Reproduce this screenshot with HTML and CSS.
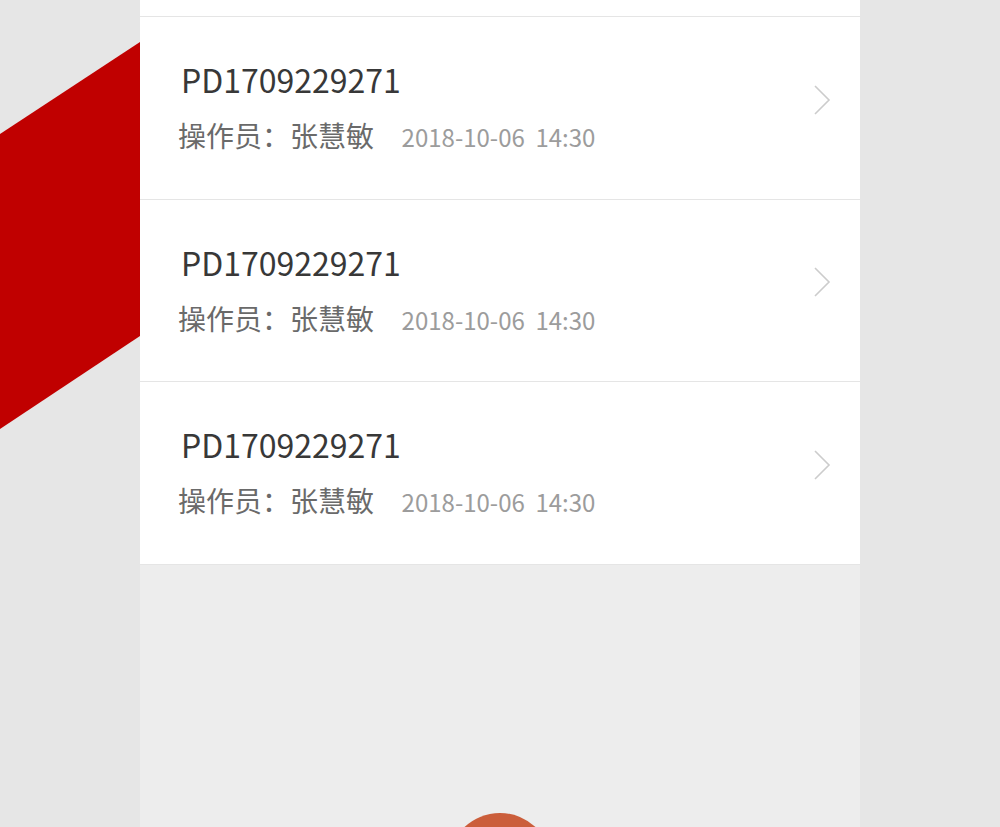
FILE: index.html
```html
<!DOCTYPE html>
<html lang="zh-CN">
<head>
    <meta charset="UTF-8">
    <meta name="viewport" content="width=device-width, initial-scale=1.0">
    <title>盘点单列表</title>
    <link rel="stylesheet" href="styles.css">
</head>
<body>
    <svg class="ribbon" width="140" height="400" viewBox="0 0 140 400">
        <polygon points="0,134 140,42 140,336 0,429" fill="#c00000"/>
    </svg>

    <div class="panel">
        <div class="list-top"></div>

        <div class="item">
            <div class="info">
                <div class="order-no">PD1709229271</div>
                <div class="meta">
                    <span class="operator">操作员：张慧敏</span>
                    <span class="date">2018-10-06</span>
                    <span class="time">14:30</span>
                </div>
            </div>
            <svg class="arrow" width="18" height="30" viewBox="0 0 18 30">
                <polyline points="1,1 15,15 1,29" fill="none" stroke="#cccccc" stroke-width="1.6"/>
            </svg>
        </div>

        <div class="item">
            <div class="info">
                <div class="order-no">PD1709229271</div>
                <div class="meta">
                    <span class="operator">操作员：张慧敏</span>
                    <span class="date">2018-10-06</span>
                    <span class="time">14:30</span>
                </div>
            </div>
            <svg class="arrow" width="18" height="30" viewBox="0 0 18 30">
                <polyline points="1,1 15,15 1,29" fill="none" stroke="#cccccc" stroke-width="1.6"/>
            </svg>
        </div>

        <div class="item">
            <div class="info">
                <div class="order-no">PD1709229271</div>
                <div class="meta">
                    <span class="operator">操作员：张慧敏</span>
                    <span class="date">2018-10-06</span>
                    <span class="time">14:30</span>
                </div>
            </div>
            <svg class="arrow" width="18" height="30" viewBox="0 0 18 30">
                <polyline points="1,1 15,15 1,29" fill="none" stroke="#cccccc" stroke-width="1.6"/>
            </svg>
        </div>

        <button class="fab" type="button"></button>
    </div>
</body>
</html>
```

FILE: styles.css
```css
body {
    margin: 0;
    padding: 0;
    background-color: #e6e6e6;
    font-family: "Noto Sans CJK SC", "Noto Sans", sans-serif;
    height: 827px;
    overflow: hidden;
}

.ribbon {
    position: absolute;
    left: 0;
    top: 0;
    overflow: visible;
}

.panel {
    position: relative;
    width: 720px;
    height: 827px;
    margin: 0 auto;
    background-color: #ededed;
    overflow: hidden;
}

.list-top {
    height: 16px;
    background-color: #fff;
    border-bottom: 1px solid #e5e5e5;
}

.item {
    display: flex;
    align-items: center;
    height: 181.5px;
    padding: 0 28px 0 38px;
    background-color: #fff;
    border-bottom: 1px solid #e5e5e5;
}

.info {
    flex: 1;
    margin-top: 4px;
}

.order-no {
    font-size: 32px;
    line-height: 40px;
    color: #383838;
    padding-left: 3px;
}

.meta {
    margin-top: 16px;
    line-height: 40px;
    white-space: nowrap;
}

.operator {
    font-size: 28px;
    color: #6a6a6a;
}

.date,
.time {
    font-size: 24px;
    color: #9c9c9c;
}

.date {
    margin-left: 24px;
}

.time {
    margin-left: 7px;
}

.arrow {
    margin-bottom: 16px;
}

.fab {
    position: absolute;
    left: 308px;
    top: 813px;
    width: 104px;
    height: 104px;
    border: none;
    border-radius: 50%;
    background-color: #cb5e3b;
    padding: 0;
}
```
